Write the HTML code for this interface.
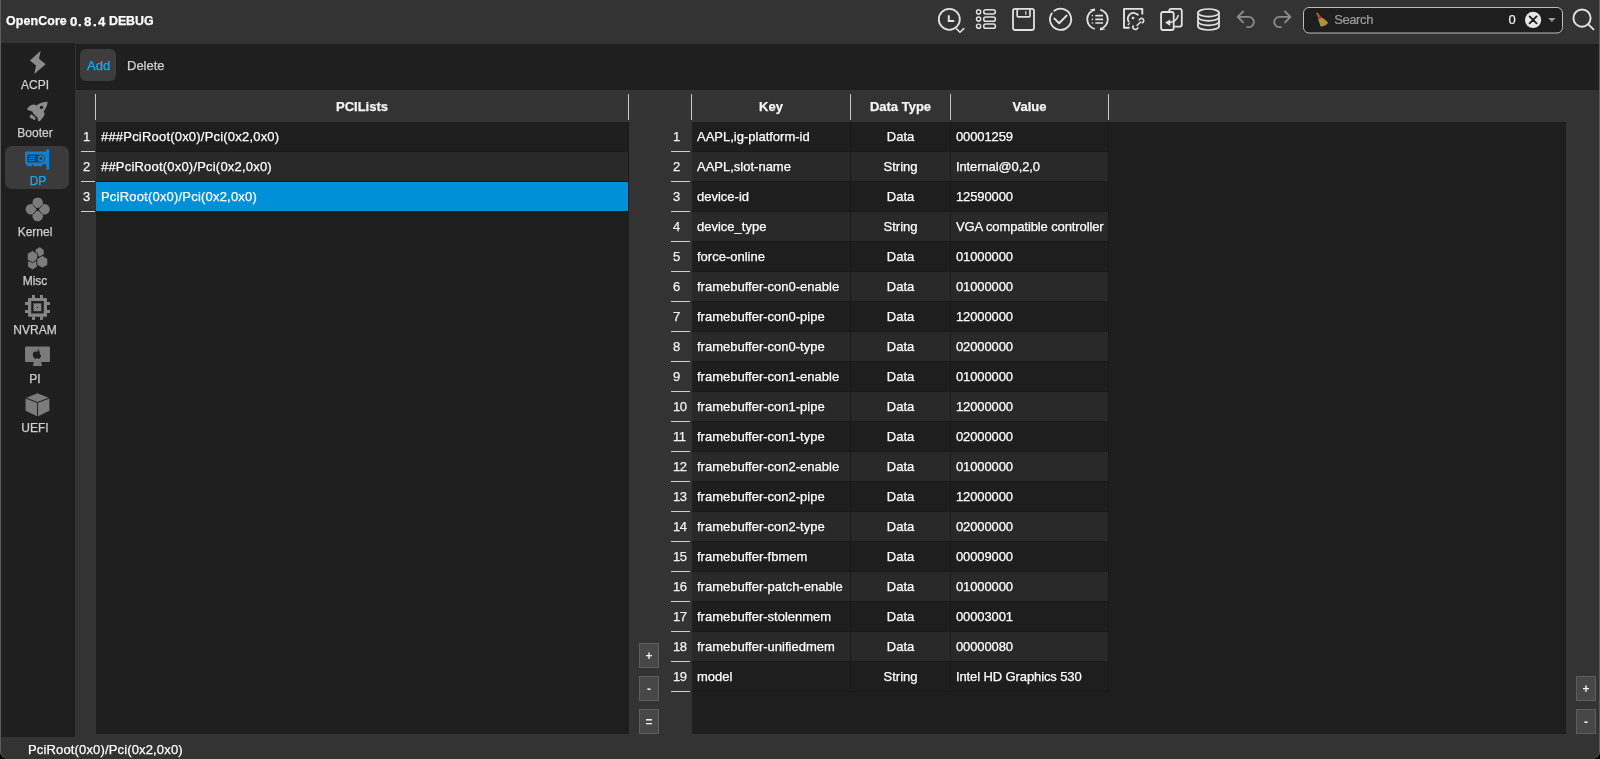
<!DOCTYPE html><html><head><meta charset="utf-8"><style>
*{margin:0;padding:0;box-sizing:border-box}
html,body{width:1600px;height:759px;overflow:hidden;background:#333333;font-family:"Liberation Sans",sans-serif;color:#fff;font-size:13px;-webkit-text-stroke:0.25px currentColor}
.a{position:absolute}
.t{position:absolute;will-change:transform;white-space:pre;line-height:30px;height:30px}
.n{position:absolute;will-change:transform;white-space:pre;line-height:30px;height:30px;text-align:center;color:#f2f2f2}
.hl{position:absolute;width:19px;height:1px;background:#cfcfcf}
.vs{position:absolute;width:1px;height:26px;top:94px;background:#c8c8c8}
.hd{position:absolute;will-change:transform;top:90px;height:32px;line-height:33px;font-weight:bold;text-align:center;color:#f4f4f4}
.btn{position:absolute;will-change:transform;width:20px;height:25px;background:#474747;border:1px solid #5e5e5e;color:#eee;text-align:center;line-height:25px;font-size:12px;font-weight:bold;-webkit-text-stroke:0}
.sl{position:absolute;will-change:transform;left:0px;width:70px;text-align:center;font-size:12px;color:#cfcfcf;line-height:14px;height:14px}
</style></head><body>
<div class="t" style="left:6px;top:1px;line-height:41px;height:41px;font-weight:bold;font-size:12.4px;letter-spacing:0.12px;color:#fff">OpenCore</div>
<div class="t" style="left:69.6px;top:1px;line-height:41px;height:41px;font-weight:bold;font-size:13.2px;letter-spacing:0px;color:#fff">0</div>
<div class="t" style="left:78.4px;top:1px;line-height:41px;height:41px;font-weight:bold;font-size:13.2px;letter-spacing:0px;color:#fff">.</div>
<div class="t" style="left:83.6px;top:1px;line-height:41px;height:41px;font-weight:bold;font-size:13.2px;letter-spacing:0px;color:#fff">8</div>
<div class="t" style="left:92.8px;top:1px;line-height:41px;height:41px;font-weight:bold;font-size:13.2px;letter-spacing:0px;color:#fff">.</div>
<div class="t" style="left:97.6px;top:1px;line-height:41px;height:41px;font-weight:bold;font-size:13.2px;letter-spacing:0px;color:#fff">4</div>
<div class="t" style="left:109.4px;top:1px;line-height:41px;height:41px;font-weight:bold;font-size:12.4px;letter-spacing:-0.05px;color:#fff">DEBUG</div>
<div class="a" style="left:1px;top:43px;width:74px;height:694px;background:#1f1f1f"></div>
<div class="a" style="left:76px;top:44px;width:1523px;height:46px;background:#1f1f1f"></div>
<div class="a" style="left:80px;top:49px;width:36px;height:32px;border-radius:6px;background:#3d3d3d"></div>
<div class="t" style="left:87px;top:50px;line-height:32px;color:#14aef0">Add</div>
<div class="t" style="left:127px;top:50px;line-height:32px;color:#d0d0d0">Delete</div>
<div class="a" style="left:96px;top:122px;width:533px;height:612px;background:#1e1e1e"></div>
<div class="a" style="left:96px;top:122px;width:533px;height:90px;background:#1a1a1a"></div>
<div class="hd" style="left:96px;width:532px">PCILists</div>
<div class="vs" style="left:95px"></div><div class="vs" style="left:628px"></div>
<div class="a" style="left:96px;top:122px;width:532px;height:29px;background:#1e1e1e"></div>
<div class="t" style="left:101px;top:122px;letter-spacing:0.2px">###PciRoot(0x0)/Pci(0x2,0x0)</div>
<div class="n" style="left:82.5px;top:122px;text-align:left">1</div>
<div class="hl" style="left:81px;top:151px;width:14px"></div>
<div class="a" style="left:96px;top:152px;width:532px;height:29px;background:#292929"></div>
<div class="t" style="left:101px;top:152px;letter-spacing:0.2px">##PciRoot(0x0)/Pci(0x2,0x0)</div>
<div class="n" style="left:82.5px;top:152px;text-align:left">2</div>
<div class="hl" style="left:81px;top:181px;width:14px"></div>
<div class="a" style="left:96px;top:182px;width:532px;height:29px;background:#0090d8"></div>
<div class="t" style="left:101px;top:182px;letter-spacing:0.2px">PciRoot(0x0)/Pci(0x2,0x0)</div>
<div class="n" style="left:82.5px;top:182px;text-align:left">3</div>
<div class="hl" style="left:81px;top:211px;width:14px"></div>
<div class="a" style="left:692px;top:122px;width:874px;height:612px;background:#1e1e1e"></div>
<div class="a" style="left:692px;top:122px;width:417px;height:570px;background:#1a1a1a"></div>
<div class="hd" style="left:692px;width:158px">Key</div>
<div class="hd" style="left:851px;width:99px">Data Type</div>
<div class="hd" style="left:951px;width:157px">Value</div>
<div class="vs" style="left:691px"></div><div class="vs" style="left:850px"></div><div class="vs" style="left:950px"></div><div class="vs" style="left:1108px"></div>
<div class="a" style="left:692px;top:122px;width:158px;height:29px;background:#1e1e1e"></div>
<div class="a" style="left:851px;top:122px;width:99px;height:29px;background:#1e1e1e"></div>
<div class="a" style="left:951px;top:122px;width:157px;height:29px;background:#1e1e1e"></div>
<div class="t" style="left:697px;top:122px">AAPL,ig-platform-id</div>
<div class="n" style="left:851px;top:122px;width:99px;color:#fff">Data</div>
<div class="t" style="left:956px;top:122px;letter-spacing:-0.11px">00001259</div>
<div class="n" style="left:672.5px;top:122px;text-align:left;letter-spacing:-0.5px">1</div>
<div class="hl" style="left:671px;top:151px;width:19px"></div>
<div class="a" style="left:692px;top:152px;width:158px;height:29px;background:#292929"></div>
<div class="a" style="left:851px;top:152px;width:99px;height:29px;background:#292929"></div>
<div class="a" style="left:951px;top:152px;width:157px;height:29px;background:#292929"></div>
<div class="t" style="left:697px;top:152px">AAPL,slot-name</div>
<div class="n" style="left:851px;top:152px;width:99px;color:#fff">String</div>
<div class="t" style="left:956px;top:152px;letter-spacing:-0.11px">Internal@0,2,0</div>
<div class="n" style="left:672.5px;top:152px;text-align:left;letter-spacing:-0.5px">2</div>
<div class="hl" style="left:671px;top:181px;width:19px"></div>
<div class="a" style="left:692px;top:182px;width:158px;height:29px;background:#1e1e1e"></div>
<div class="a" style="left:851px;top:182px;width:99px;height:29px;background:#1e1e1e"></div>
<div class="a" style="left:951px;top:182px;width:157px;height:29px;background:#1e1e1e"></div>
<div class="t" style="left:697px;top:182px">device-id</div>
<div class="n" style="left:851px;top:182px;width:99px;color:#fff">Data</div>
<div class="t" style="left:956px;top:182px;letter-spacing:-0.11px">12590000</div>
<div class="n" style="left:672.5px;top:182px;text-align:left;letter-spacing:-0.5px">3</div>
<div class="hl" style="left:671px;top:211px;width:19px"></div>
<div class="a" style="left:692px;top:212px;width:158px;height:29px;background:#292929"></div>
<div class="a" style="left:851px;top:212px;width:99px;height:29px;background:#292929"></div>
<div class="a" style="left:951px;top:212px;width:157px;height:29px;background:#292929"></div>
<div class="t" style="left:697px;top:212px">device_type</div>
<div class="n" style="left:851px;top:212px;width:99px;color:#fff">String</div>
<div class="t" style="left:956px;top:212px;letter-spacing:-0.11px">VGA compatible controller</div>
<div class="n" style="left:672.5px;top:212px;text-align:left;letter-spacing:-0.5px">4</div>
<div class="hl" style="left:671px;top:241px;width:19px"></div>
<div class="a" style="left:692px;top:242px;width:158px;height:29px;background:#1e1e1e"></div>
<div class="a" style="left:851px;top:242px;width:99px;height:29px;background:#1e1e1e"></div>
<div class="a" style="left:951px;top:242px;width:157px;height:29px;background:#1e1e1e"></div>
<div class="t" style="left:697px;top:242px">force-online</div>
<div class="n" style="left:851px;top:242px;width:99px;color:#fff">Data</div>
<div class="t" style="left:956px;top:242px;letter-spacing:-0.11px">01000000</div>
<div class="n" style="left:672.5px;top:242px;text-align:left;letter-spacing:-0.5px">5</div>
<div class="hl" style="left:671px;top:271px;width:19px"></div>
<div class="a" style="left:692px;top:272px;width:158px;height:29px;background:#292929"></div>
<div class="a" style="left:851px;top:272px;width:99px;height:29px;background:#292929"></div>
<div class="a" style="left:951px;top:272px;width:157px;height:29px;background:#292929"></div>
<div class="t" style="left:697px;top:272px">framebuffer-con0-enable</div>
<div class="n" style="left:851px;top:272px;width:99px;color:#fff">Data</div>
<div class="t" style="left:956px;top:272px;letter-spacing:-0.11px">01000000</div>
<div class="n" style="left:672.5px;top:272px;text-align:left;letter-spacing:-0.5px">6</div>
<div class="hl" style="left:671px;top:301px;width:19px"></div>
<div class="a" style="left:692px;top:302px;width:158px;height:29px;background:#1e1e1e"></div>
<div class="a" style="left:851px;top:302px;width:99px;height:29px;background:#1e1e1e"></div>
<div class="a" style="left:951px;top:302px;width:157px;height:29px;background:#1e1e1e"></div>
<div class="t" style="left:697px;top:302px">framebuffer-con0-pipe</div>
<div class="n" style="left:851px;top:302px;width:99px;color:#fff">Data</div>
<div class="t" style="left:956px;top:302px;letter-spacing:-0.11px">12000000</div>
<div class="n" style="left:672.5px;top:302px;text-align:left;letter-spacing:-0.5px">7</div>
<div class="hl" style="left:671px;top:331px;width:19px"></div>
<div class="a" style="left:692px;top:332px;width:158px;height:29px;background:#292929"></div>
<div class="a" style="left:851px;top:332px;width:99px;height:29px;background:#292929"></div>
<div class="a" style="left:951px;top:332px;width:157px;height:29px;background:#292929"></div>
<div class="t" style="left:697px;top:332px">framebuffer-con0-type</div>
<div class="n" style="left:851px;top:332px;width:99px;color:#fff">Data</div>
<div class="t" style="left:956px;top:332px;letter-spacing:-0.11px">02000000</div>
<div class="n" style="left:672.5px;top:332px;text-align:left;letter-spacing:-0.5px">8</div>
<div class="hl" style="left:671px;top:361px;width:19px"></div>
<div class="a" style="left:692px;top:362px;width:158px;height:29px;background:#1e1e1e"></div>
<div class="a" style="left:851px;top:362px;width:99px;height:29px;background:#1e1e1e"></div>
<div class="a" style="left:951px;top:362px;width:157px;height:29px;background:#1e1e1e"></div>
<div class="t" style="left:697px;top:362px">framebuffer-con1-enable</div>
<div class="n" style="left:851px;top:362px;width:99px;color:#fff">Data</div>
<div class="t" style="left:956px;top:362px;letter-spacing:-0.11px">01000000</div>
<div class="n" style="left:672.5px;top:362px;text-align:left;letter-spacing:-0.5px">9</div>
<div class="hl" style="left:671px;top:391px;width:19px"></div>
<div class="a" style="left:692px;top:392px;width:158px;height:29px;background:#292929"></div>
<div class="a" style="left:851px;top:392px;width:99px;height:29px;background:#292929"></div>
<div class="a" style="left:951px;top:392px;width:157px;height:29px;background:#292929"></div>
<div class="t" style="left:697px;top:392px">framebuffer-con1-pipe</div>
<div class="n" style="left:851px;top:392px;width:99px;color:#fff">Data</div>
<div class="t" style="left:956px;top:392px;letter-spacing:-0.11px">12000000</div>
<div class="n" style="left:672.5px;top:392px;text-align:left;letter-spacing:-0.5px">10</div>
<div class="hl" style="left:671px;top:421px;width:19px"></div>
<div class="a" style="left:692px;top:422px;width:158px;height:29px;background:#1e1e1e"></div>
<div class="a" style="left:851px;top:422px;width:99px;height:29px;background:#1e1e1e"></div>
<div class="a" style="left:951px;top:422px;width:157px;height:29px;background:#1e1e1e"></div>
<div class="t" style="left:697px;top:422px">framebuffer-con1-type</div>
<div class="n" style="left:851px;top:422px;width:99px;color:#fff">Data</div>
<div class="t" style="left:956px;top:422px;letter-spacing:-0.11px">02000000</div>
<div class="n" style="left:672.5px;top:422px;text-align:left;letter-spacing:-0.5px">11</div>
<div class="hl" style="left:671px;top:451px;width:19px"></div>
<div class="a" style="left:692px;top:452px;width:158px;height:29px;background:#292929"></div>
<div class="a" style="left:851px;top:452px;width:99px;height:29px;background:#292929"></div>
<div class="a" style="left:951px;top:452px;width:157px;height:29px;background:#292929"></div>
<div class="t" style="left:697px;top:452px">framebuffer-con2-enable</div>
<div class="n" style="left:851px;top:452px;width:99px;color:#fff">Data</div>
<div class="t" style="left:956px;top:452px;letter-spacing:-0.11px">01000000</div>
<div class="n" style="left:672.5px;top:452px;text-align:left;letter-spacing:-0.5px">12</div>
<div class="hl" style="left:671px;top:481px;width:19px"></div>
<div class="a" style="left:692px;top:482px;width:158px;height:29px;background:#1e1e1e"></div>
<div class="a" style="left:851px;top:482px;width:99px;height:29px;background:#1e1e1e"></div>
<div class="a" style="left:951px;top:482px;width:157px;height:29px;background:#1e1e1e"></div>
<div class="t" style="left:697px;top:482px">framebuffer-con2-pipe</div>
<div class="n" style="left:851px;top:482px;width:99px;color:#fff">Data</div>
<div class="t" style="left:956px;top:482px;letter-spacing:-0.11px">12000000</div>
<div class="n" style="left:672.5px;top:482px;text-align:left;letter-spacing:-0.5px">13</div>
<div class="hl" style="left:671px;top:511px;width:19px"></div>
<div class="a" style="left:692px;top:512px;width:158px;height:29px;background:#292929"></div>
<div class="a" style="left:851px;top:512px;width:99px;height:29px;background:#292929"></div>
<div class="a" style="left:951px;top:512px;width:157px;height:29px;background:#292929"></div>
<div class="t" style="left:697px;top:512px">framebuffer-con2-type</div>
<div class="n" style="left:851px;top:512px;width:99px;color:#fff">Data</div>
<div class="t" style="left:956px;top:512px;letter-spacing:-0.11px">02000000</div>
<div class="n" style="left:672.5px;top:512px;text-align:left;letter-spacing:-0.5px">14</div>
<div class="hl" style="left:671px;top:541px;width:19px"></div>
<div class="a" style="left:692px;top:542px;width:158px;height:29px;background:#1e1e1e"></div>
<div class="a" style="left:851px;top:542px;width:99px;height:29px;background:#1e1e1e"></div>
<div class="a" style="left:951px;top:542px;width:157px;height:29px;background:#1e1e1e"></div>
<div class="t" style="left:697px;top:542px">framebuffer-fbmem</div>
<div class="n" style="left:851px;top:542px;width:99px;color:#fff">Data</div>
<div class="t" style="left:956px;top:542px;letter-spacing:-0.11px">00009000</div>
<div class="n" style="left:672.5px;top:542px;text-align:left;letter-spacing:-0.5px">15</div>
<div class="hl" style="left:671px;top:571px;width:19px"></div>
<div class="a" style="left:692px;top:572px;width:158px;height:29px;background:#292929"></div>
<div class="a" style="left:851px;top:572px;width:99px;height:29px;background:#292929"></div>
<div class="a" style="left:951px;top:572px;width:157px;height:29px;background:#292929"></div>
<div class="t" style="left:697px;top:572px">framebuffer-patch-enable</div>
<div class="n" style="left:851px;top:572px;width:99px;color:#fff">Data</div>
<div class="t" style="left:956px;top:572px;letter-spacing:-0.11px">01000000</div>
<div class="n" style="left:672.5px;top:572px;text-align:left;letter-spacing:-0.5px">16</div>
<div class="hl" style="left:671px;top:601px;width:19px"></div>
<div class="a" style="left:692px;top:602px;width:158px;height:29px;background:#1e1e1e"></div>
<div class="a" style="left:851px;top:602px;width:99px;height:29px;background:#1e1e1e"></div>
<div class="a" style="left:951px;top:602px;width:157px;height:29px;background:#1e1e1e"></div>
<div class="t" style="left:697px;top:602px">framebuffer-stolenmem</div>
<div class="n" style="left:851px;top:602px;width:99px;color:#fff">Data</div>
<div class="t" style="left:956px;top:602px;letter-spacing:-0.11px">00003001</div>
<div class="n" style="left:672.5px;top:602px;text-align:left;letter-spacing:-0.5px">17</div>
<div class="hl" style="left:671px;top:631px;width:19px"></div>
<div class="a" style="left:692px;top:632px;width:158px;height:29px;background:#292929"></div>
<div class="a" style="left:851px;top:632px;width:99px;height:29px;background:#292929"></div>
<div class="a" style="left:951px;top:632px;width:157px;height:29px;background:#292929"></div>
<div class="t" style="left:697px;top:632px">framebuffer-unifiedmem</div>
<div class="n" style="left:851px;top:632px;width:99px;color:#fff">Data</div>
<div class="t" style="left:956px;top:632px;letter-spacing:-0.11px">00000080</div>
<div class="n" style="left:672.5px;top:632px;text-align:left;letter-spacing:-0.5px">18</div>
<div class="hl" style="left:671px;top:661px;width:19px"></div>
<div class="a" style="left:692px;top:662px;width:158px;height:29px;background:#1e1e1e"></div>
<div class="a" style="left:851px;top:662px;width:99px;height:29px;background:#1e1e1e"></div>
<div class="a" style="left:951px;top:662px;width:157px;height:29px;background:#1e1e1e"></div>
<div class="t" style="left:697px;top:662px">model</div>
<div class="n" style="left:851px;top:662px;width:99px;color:#fff">String</div>
<div class="t" style="left:956px;top:662px;letter-spacing:-0.11px">Intel HD Graphics 530</div>
<div class="n" style="left:672.5px;top:662px;text-align:left;letter-spacing:-0.5px">19</div>
<div class="hl" style="left:671px;top:691px;width:19px"></div>
<div class="btn" style="left:639px;top:643px">+</div>
<div class="btn" style="left:639px;top:676px">-</div>
<div class="btn" style="left:639px;top:709px">=</div>
<div class="btn" style="left:1576px;top:676px">+</div>
<div class="btn" style="left:1576px;top:709px">-</div>
<div class="t" style="left:28px;top:739px;line-height:22px;height:22px;letter-spacing:0.15px">PciRoot(0x0)/Pci(0x2,0x0)</div>
<div class="a" style="left:5px;top:146px;width:64px;height:43px;border-radius:7px;background:#3b3b3b"></div>
<div class="sl" style="top:78px;left:0px;color:#cfcfcf">ACPI</div>
<div class="sl" style="top:126px;left:0px;color:#cfcfcf">Booter</div>
<div class="sl" style="top:174px;left:2.5px;color:#1ea8ec">DP</div>
<div class="sl" style="top:225px;left:0px;color:#cfcfcf">Kernel</div>
<div class="sl" style="top:274px;left:0px;color:#cfcfcf">Misc</div>
<div class="sl" style="top:323px;left:0px;color:#cfcfcf">NVRAM</div>
<div class="sl" style="top:372px;left:0px;color:#cfcfcf">PI</div>
<div class="sl" style="top:421px;left:0px;color:#cfcfcf">UEFI</div>
<div class="a" style="left:-20px;top:-20px;width:1640px;height:799px;border:20px solid #000;border-top:0;border-radius:0 0 28px 28px;pointer-events:none"></div>
<div class="a" style="left:0;top:-10px;width:1600px;height:769px;border:1px solid #5c5c5c;border-top:0;border-bottom:0;border-radius:0 0 8px 8px;pointer-events:none"></div>
<svg class="a" style="left:0;top:0" width="1600" height="759" viewBox="0 0 1600 759">
<!-- toolbar icons -->
<g fill="none" stroke="#e2e2e2" stroke-width="1.8" stroke-linecap="round" stroke-linejoin="round">
  <!-- clock search -->
  <circle cx="949.3" cy="19.3" r="10.5"/>
  <path d="M948.8,15.2 V20.9 H954.2" stroke-width="2" stroke-linecap="butt" stroke-linejoin="miter"/>
  <path d="M956.6,28.9 L960,32.2 L963.8,28.6" stroke-width="1.5"/>
  <!-- list -->
  <circle cx="978.6" cy="11.9" r="2.1" stroke-width="1.4"/>
  <circle cx="978.6" cy="19.1" r="2.1" stroke-width="1.4"/>
  <circle cx="978.6" cy="26.2" r="2.1" stroke-width="1.4"/>
  <rect x="983.7" y="9.7" width="11.7" height="4.3" rx="2.15" stroke-width="1.5"/>
  <rect x="983.7" y="17" width="11.7" height="4.3" rx="2.15" stroke-width="1.5"/>
  <rect x="983.7" y="24" width="11.7" height="4.3" rx="2.15" stroke-width="1.5"/>
  <!-- floppy -->
  <rect x="1013" y="8.8" width="21" height="21.2" rx="2.2"/>
  <path d="M1017.2,8.8 V15.8 Q1017.2,16.9 1018.3,16.9 H1028.9 Q1030,16.9 1030,15.8 V8.8" stroke-width="1.7"/>
  <path d="M1025.8,11.2 V14.8" stroke-width="1.2" stroke-linecap="butt"/>
  <!-- check circle -->
  <path d="M1054.25,10.81 A10.6,10.6 0 1 1 1051.82,13.36"/>
  <path d="M1054.4,18.6 L1059.2,23.2 L1066.6,15.6" stroke-width="2"/>
  <!-- sync list -->
  <path d="M1094.8,9.6 A10,10 0 0 0 1094.8,29.0" stroke-width="1.8" stroke-linecap="butt"/>
  <path d="M1100.2,29.0 A10,10 0 0 0 1100.2,9.6" stroke-width="1.8" stroke-linecap="butt"/>
  <path d="M1095.3,15.6 H1103.1 M1095.3,19.4 H1103.1 M1095.3,23 H1103.1" stroke-width="1.7" stroke-linecap="butt"/>
  <!-- disk open rect -->
  <path d="M1129.6,27.8 H1124 V8.9 H1142.3 V14.4" stroke-width="1.9" stroke-linecap="butt"/>
  <path d="M1138.4,15.4 A5.6,5.6 0 1 0 1128.9,22.3" stroke-width="1.8" stroke-linecap="butt"/>
  <path d="M1137,25.5 L1140.6,22" stroke-width="1.5"/>
  <path d="M1139.3,19.8 A2.3,2.3 0 1 1 1142.3,22.8" stroke-width="1.6"/>
  <path d="M1133.1,25.9 A2.3,2.3 0 1 0 1137.9,27.8" stroke-width="1.6"/>
  <!-- copy -->
  <path d="M1169.2,11.2 V10.9 Q1169.2,8.9 1171.2,8.9 H1179.8 Q1181.8,8.9 1181.8,10.9 V24.6 Q1181.8,26.6 1179.8,26.6 H1174.6" stroke-width="1.8"/>
  <rect x="1161.1" y="12" width="12.6" height="18" rx="2" stroke-width="1.8"/>
  <path d="M1178.3,15.6 Q1176.2,21.6 1170.2,22.6" stroke-width="1.5" stroke-linecap="round"/>
  <!-- database -->
  <ellipse cx="1208.5" cy="12.8" rx="10.5" ry="3.8" stroke-width="1.7"/>
  <path d="M1198,12.8 V26.2 M1219,12.8 V26.2" stroke-width="1.7"/>
  <path d="M1198,17.1 A10.5,3.8 0 0 0 1219,17.1 M1198,21.6 A10.5,3.8 0 0 0 1219,21.6 M1198,26.2 A10.5,3.8 0 0 0 1219,26.2" stroke-width="1.7"/>
  <!-- magnifier -->
  <circle cx="1582" cy="18.1" r="8.6" stroke-width="1.9"/>
  <path d="M1588.3,24.4 L1593.5,29.4" stroke-width="1.9"/>
</g>
<g fill="#e2e2e2">
  <path d="M1089.5,9.6 L1095,8.4 L1095,11.2 Z"/>
  <path d="M1105.6,29.2 L1100,30.4 L1100,27.6 Z"/>
  <circle cx="1092.4" cy="15.6" r="0.8"/>
  <circle cx="1092.4" cy="19.4" r="0.8"/>
  <circle cx="1092.4" cy="23.0" r="0.8"/>
  <circle cx="1133" cy="18" r="1.3"/>
  <path d="M1127.2,24.2 L1130.6,22.3 L1128.8,25.6 Z"/>
  <path d="M1165.1,22.6 L1170.2,19.6 L1170.2,25.9 Z"/>
</g>
<!-- undo redo -->
<g fill="none" stroke="#8c8c8c" stroke-width="1.9" stroke-linecap="round" stroke-linejoin="round">
  <path d="M1243.1,11.5 L1237.7,16.9 L1243.1,22.3 M1237.7,16.9 H1248.8 A5.1,5.1 0 0 1 1248.8,27.1 H1247.2"/>
  <path d="M1285,11.5 L1290.4,16.9 L1285,22.3 M1290.4,16.9 H1279.3 A5.1,5.1 0 0 0 1279.3,27.1 H1280.9"/>
</g>
<!-- search box -->
<rect x="1303.5" y="7.5" width="259" height="25.5" rx="5.5" fill="#1e1e1e" stroke="#bcbcbc" stroke-width="1"/>
<g>
  <path d="M1315.8,13.4 Q1316.6,11.8 1318.2,12.9 L1321.0,17.0 L1318.8,18.2 Z" fill="#9a5b2a"/>
  <path d="M1317.7,17.6 L1321.6,16.6 L1322.4,18.4 L1318.6,19.6 Z" fill="#b03030"/>
  <path d="M1318.2,19.2 L1322.4,17.8 L1328.2,22.6 Q1326.4,25.8 1320.8,26.8 Z" fill="#b0923e"/>
</g>
<text x="1334.2" y="24" font-family="Liberation Sans" font-size="13" letter-spacing="-0.4" fill="#9d9d9d" stroke="#9d9d9d" stroke-width="0.2">Search</text>
<text x="1508.6" y="24" font-family="Liberation Sans" font-size="13" fill="#f0f0f0" stroke="#f0f0f0" stroke-width="0.2">0</text>
<circle cx="1533.1" cy="19.9" r="8.1" fill="#e6e6e6"/>
<path d="M1529.6,16.4 L1536.6,23.4 M1536.6,16.4 L1529.6,23.4" stroke="#1e1e1e" stroke-width="1.8" stroke-linecap="round"/>
<path d="M1548.1,18.1 H1555.6 L1551.9,22.1 Z" fill="#9a9a9a"/>

<!-- sidebar icons -->
<g fill="#8b8b8b">
  <path d="M40.66,50.85 L38.97,58.65 L45.7,64.3 L34.3,74 L36,65.4 L29.9,60.5 Z"/>
  <!-- rocket -->
  <path d="M47.5,101.7 C47.6,104.2 46.8,107.4 43.6,111.4 C44.6,113.2 44.8,114.6 44.2,115.6 C43.2,117.6 41.2,120 39.6,121.3 C38.6,121.6 38.0,120.9 37.9,120 L37.6,117.4 C36.6,116.8 35.4,116 34.6,115 C33.6,114 32.8,112.6 32.3,111.4 L29.2,110.6 C27.8,110.3 27.0,109.6 27.3,108.6 C28.4,107 30.4,105.4 32.4,104.8 C33.8,104.4 35.2,104.6 36.4,105.6 C39.8,102.6 43.6,101.6 47.5,101.7 Z"/>
  <path d="M31.6,114.0 L33.0,115.4 L35.6,117.8 L35.3,119.8 L33.8,120.0 L32.6,118.8 L31.5,119.0 L31.0,117.8 L29.6,117.4 L29.5,116.0 L30.6,115.2 Z"/>
  <circle cx="37.7" cy="202.7" r="5.3" fill="#7b7b7b"/>
  <circle cx="30.96" cy="209.2" r="5.3" fill="#7b7b7b"/>
  <circle cx="44.45" cy="209.2" r="5.3" fill="#7b7b7b"/>
  <circle cx="37.7" cy="216" r="5.3" fill="#7b7b7b"/>
</g>
<circle cx="41.5" cy="107.4" r="1.7" fill="#1f1f1f"/>
<path d="M33,205.3 L42.4,214.1 M42.4,205.3 L33,214.1" stroke="#1f1f1f" stroke-width="0.9"/>
<!-- misc hexes -->
<g fill="#7b7b7b" stroke="#1f1f1f" stroke-width="0.9">
  <path d="M39.60,246.80 L44.10,249.40 L44.10,254.60 L39.60,257.20 L35.10,254.60 L35.10,249.40 Z"/>
  <path d="M32.50,258.60 L37.35,261.40 L37.35,267.00 L32.50,269.80 L27.65,267.00 L27.65,261.40 Z"/>
  <path d="M32.45,250.60 L37.69,253.62 L37.69,259.67 L32.45,262.70 L27.21,259.67 L27.21,253.62 Z"/>
  <path d="M42.35,255.50 L47.81,258.65 L47.81,264.95 L42.35,268.10 L36.89,264.95 L36.89,258.65 Z"/>
</g>
<!-- nvram chip -->
<g fill="#858585">
  <path fill-rule="evenodd" d="M28,298 H47 V316.7 H28 Z M31.2,301.1 V313.6 H43.8 V301.1 Z"/>
  <rect x="33.5" y="303.4" width="7.8" height="7.8"/>
  <rect x="32" y="295" width="3" height="3.2"/><rect x="40" y="295" width="3" height="3.2"/>
  <rect x="32" y="316.5" width="3" height="3.4"/><rect x="40" y="316.5" width="3" height="3.4"/>
  <rect x="25" y="302" width="3.2" height="3"/><rect x="25" y="310" width="3.2" height="3"/>
  <rect x="46.8" y="302" width="3.2" height="3"/><rect x="46.8" y="310" width="3.2" height="3"/>
</g>
<circle cx="37.5" cy="307.4" r="0.6" fill="#1f1f1f"/>
<!-- PI monitor -->
<g fill="#7b7b7b">
  <rect x="25.06" y="346.5" width="24.84" height="15.4" rx="1"/>
  <path d="M33.9,361.5 H41.1 L42.1,366.1 H32.9 Z"/>
</g>
<path d="M37.2,351.6 C38.2,351.4 39.2,351 40.3,351.7 C39.3,352.4 39.3,354.6 41.2,355.4 C40.8,356.9 39.8,358.7 38.8,358.8 C38,358.8 37.7,358.3 37.1,358.3 C36.3,358.3 36,358.8 35.3,358.8 C34.1,358.8 32.8,356.3 32.8,354.4 C32.8,352.3 34.2,351.3 35.4,351.4 C36.2,351.4 36.7,351.8 37.2,351.6 Z M37.3,351 C37.3,349.9 38.2,349 39.1,348.9 C39.2,350 38.3,351 37.3,351 Z" fill="#1f1f1f"/>
<!-- UEFI cube -->
<g fill="#7b7b7b" stroke="#1f1f1f" stroke-width="0.9" stroke-linejoin="round">
  <path d="M37.5,392.8 L49.9,397.85 L37.5,402.6 L25.06,397.85 Z"/>
  <path d="M25.06,397.85 L37.5,402.6 V417 L25.06,410.9 Z"/>
  <path d="M49.9,397.85 L37.5,402.6 V417 L49.9,410.9 Z"/>
</g>
<!-- GPU -->
<g fill="#0b80d9">
  <path fill-rule="evenodd" d="M26,151.6 H47 V164.2 H26 Q25.06,164.2 25.06,163.2 V152.6 Q25.06,151.6 26,151.6 Z M28.4,154.4 H40.9 A4.0,4.0 0 0 1 40.9,162.45 H28.4 Q27.2,162.45 27.2,161.25 V155.6 Q27.2,154.4 28.4,154.4 Z"/>
  <rect x="46.35" y="149.05" width="2.75" height="20.85" rx="1.37"/>
  <rect x="26.75" y="163.5" width="5.05" height="2.8" rx="0.8"/>
  <rect x="33.1" y="163.5" width="9.2" height="2.8" rx="0.8"/>
  <rect x="28.85" y="156" width="6.15" height="1" />
  <rect x="28.85" y="158" width="6.15" height="1" />
  <rect x="28.85" y="159.9" width="6.15" height="1" />
  <path fill-rule="evenodd" d="M40.9,155.25 A3.2,3.2 0 1 1 40.9,161.65 A3.2,3.2 0 1 1 40.9,155.25 Z M40.9,156.95 A1.5,1.5 0 1 0 40.9,159.95 A1.5,1.5 0 1 0 40.9,156.95 Z"/>
</g>
</svg>

</body></html>
